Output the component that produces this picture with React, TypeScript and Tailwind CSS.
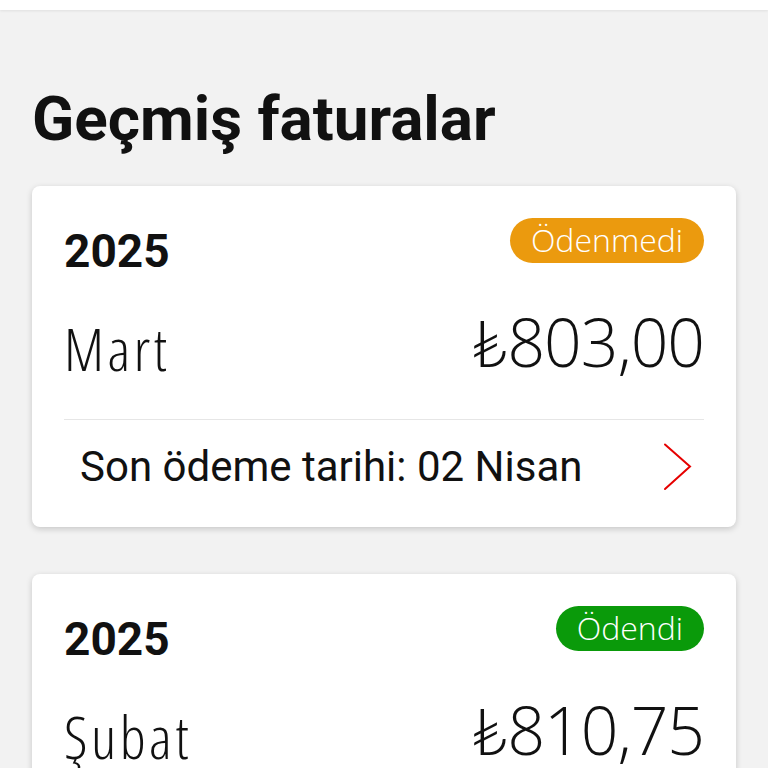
type Bill = {
  year: string
  month: string
  amount: string
  status: 'paid' | 'unpaid'
  due?: string
}

const bills: Bill[] = [
  { year: '2025', month: 'Mart', amount: '₺803,00', status: 'unpaid', due: 'Son ödeme tarihi: 02 Nisan' },
  { year: '2025', month: 'Şubat', amount: '₺810,75', status: 'paid', due: 'Son ödeme tarihi: 02 Mart' },
]

function Badge({ status }: { status: Bill['status'] }) {
  const paid = status === 'paid'
  return (
    <span
      className={
        'h-[45px] rounded-full px-[21px] pb-[2px] flex items-center text-white text-[32px] font-light leading-none font-["Open_Sans",sans-serif] ' +
        (paid ? 'bg-[#0a9a0a]' : 'bg-[#eb9a0e]')
      }
    >
      {paid ? 'Ödendi' : 'Ödenmedi'}
    </span>
  )
}

function Chevron() {
  return (
    <svg width="30" height="48" viewBox="0 0 30 48" fill="none" className="mr-[11px]">
      <path d="M2 1.5 L27 23.5 L2 46" stroke="#e60000" strokeWidth="2" strokeLinecap="round" strokeLinejoin="miter" />
    </svg>
  )
}

function BillCard({ bill }: { bill: Bill }) {
  return (
    <div className="mx-8 bg-white rounded-lg shadow-[0_2px_6px_rgba(0,0,0,0.18)] px-8 pt-8">
      <div className="h-[45px] flex items-center justify-between">
        <span className="mt-[20px] text-[46px] font-bold text-[#111] font-['Roboto',sans-serif] leading-none">
          {bill.year}
        </span>
        <Badge status={bill.status} />
      </div>
      <div className="mt-[45px] h-[80px] flex items-center justify-between font-['Open_Sans','Lato','Noto_Sans',sans-serif] font-light text-[#111] leading-none">
        <span className="text-[59px] font-stretch-[75%] tracking-[3.5px]">{bill.month}</span>
        <span className="text-[66px] tracking-[-1px] mb-[14px]">{bill.amount}</span>
      </div>
      <div className="mt-[31px] border-t border-[#e6e6e6]" />
      <div className="h-[107px] pb-[13px] flex items-center justify-between pl-4">
        <span className="text-[42px] text-[#111] font-['Roboto',sans-serif] leading-none">{bill.due}</span>
        <Chevron />
      </div>
    </div>
  )
}

export default function App() {
  return (
    <div className="min-h-screen bg-[#f2f2f2]">
      <div className="h-[10px] bg-white shadow-[0_1px_3px_rgba(0,0,0,0.08)]" />
      <h1 className="px-8 pt-[77px] pb-[35px] text-[62px] leading-[64px] font-bold text-[#111] font-['Roboto',sans-serif]">
        Geçmiş faturalar
      </h1>
      <div className="flex flex-col gap-[47px]">
        {bills.map((b, i) => (
          <BillCard key={i} bill={b} />
        ))}
      </div>
    </div>
  )
}
